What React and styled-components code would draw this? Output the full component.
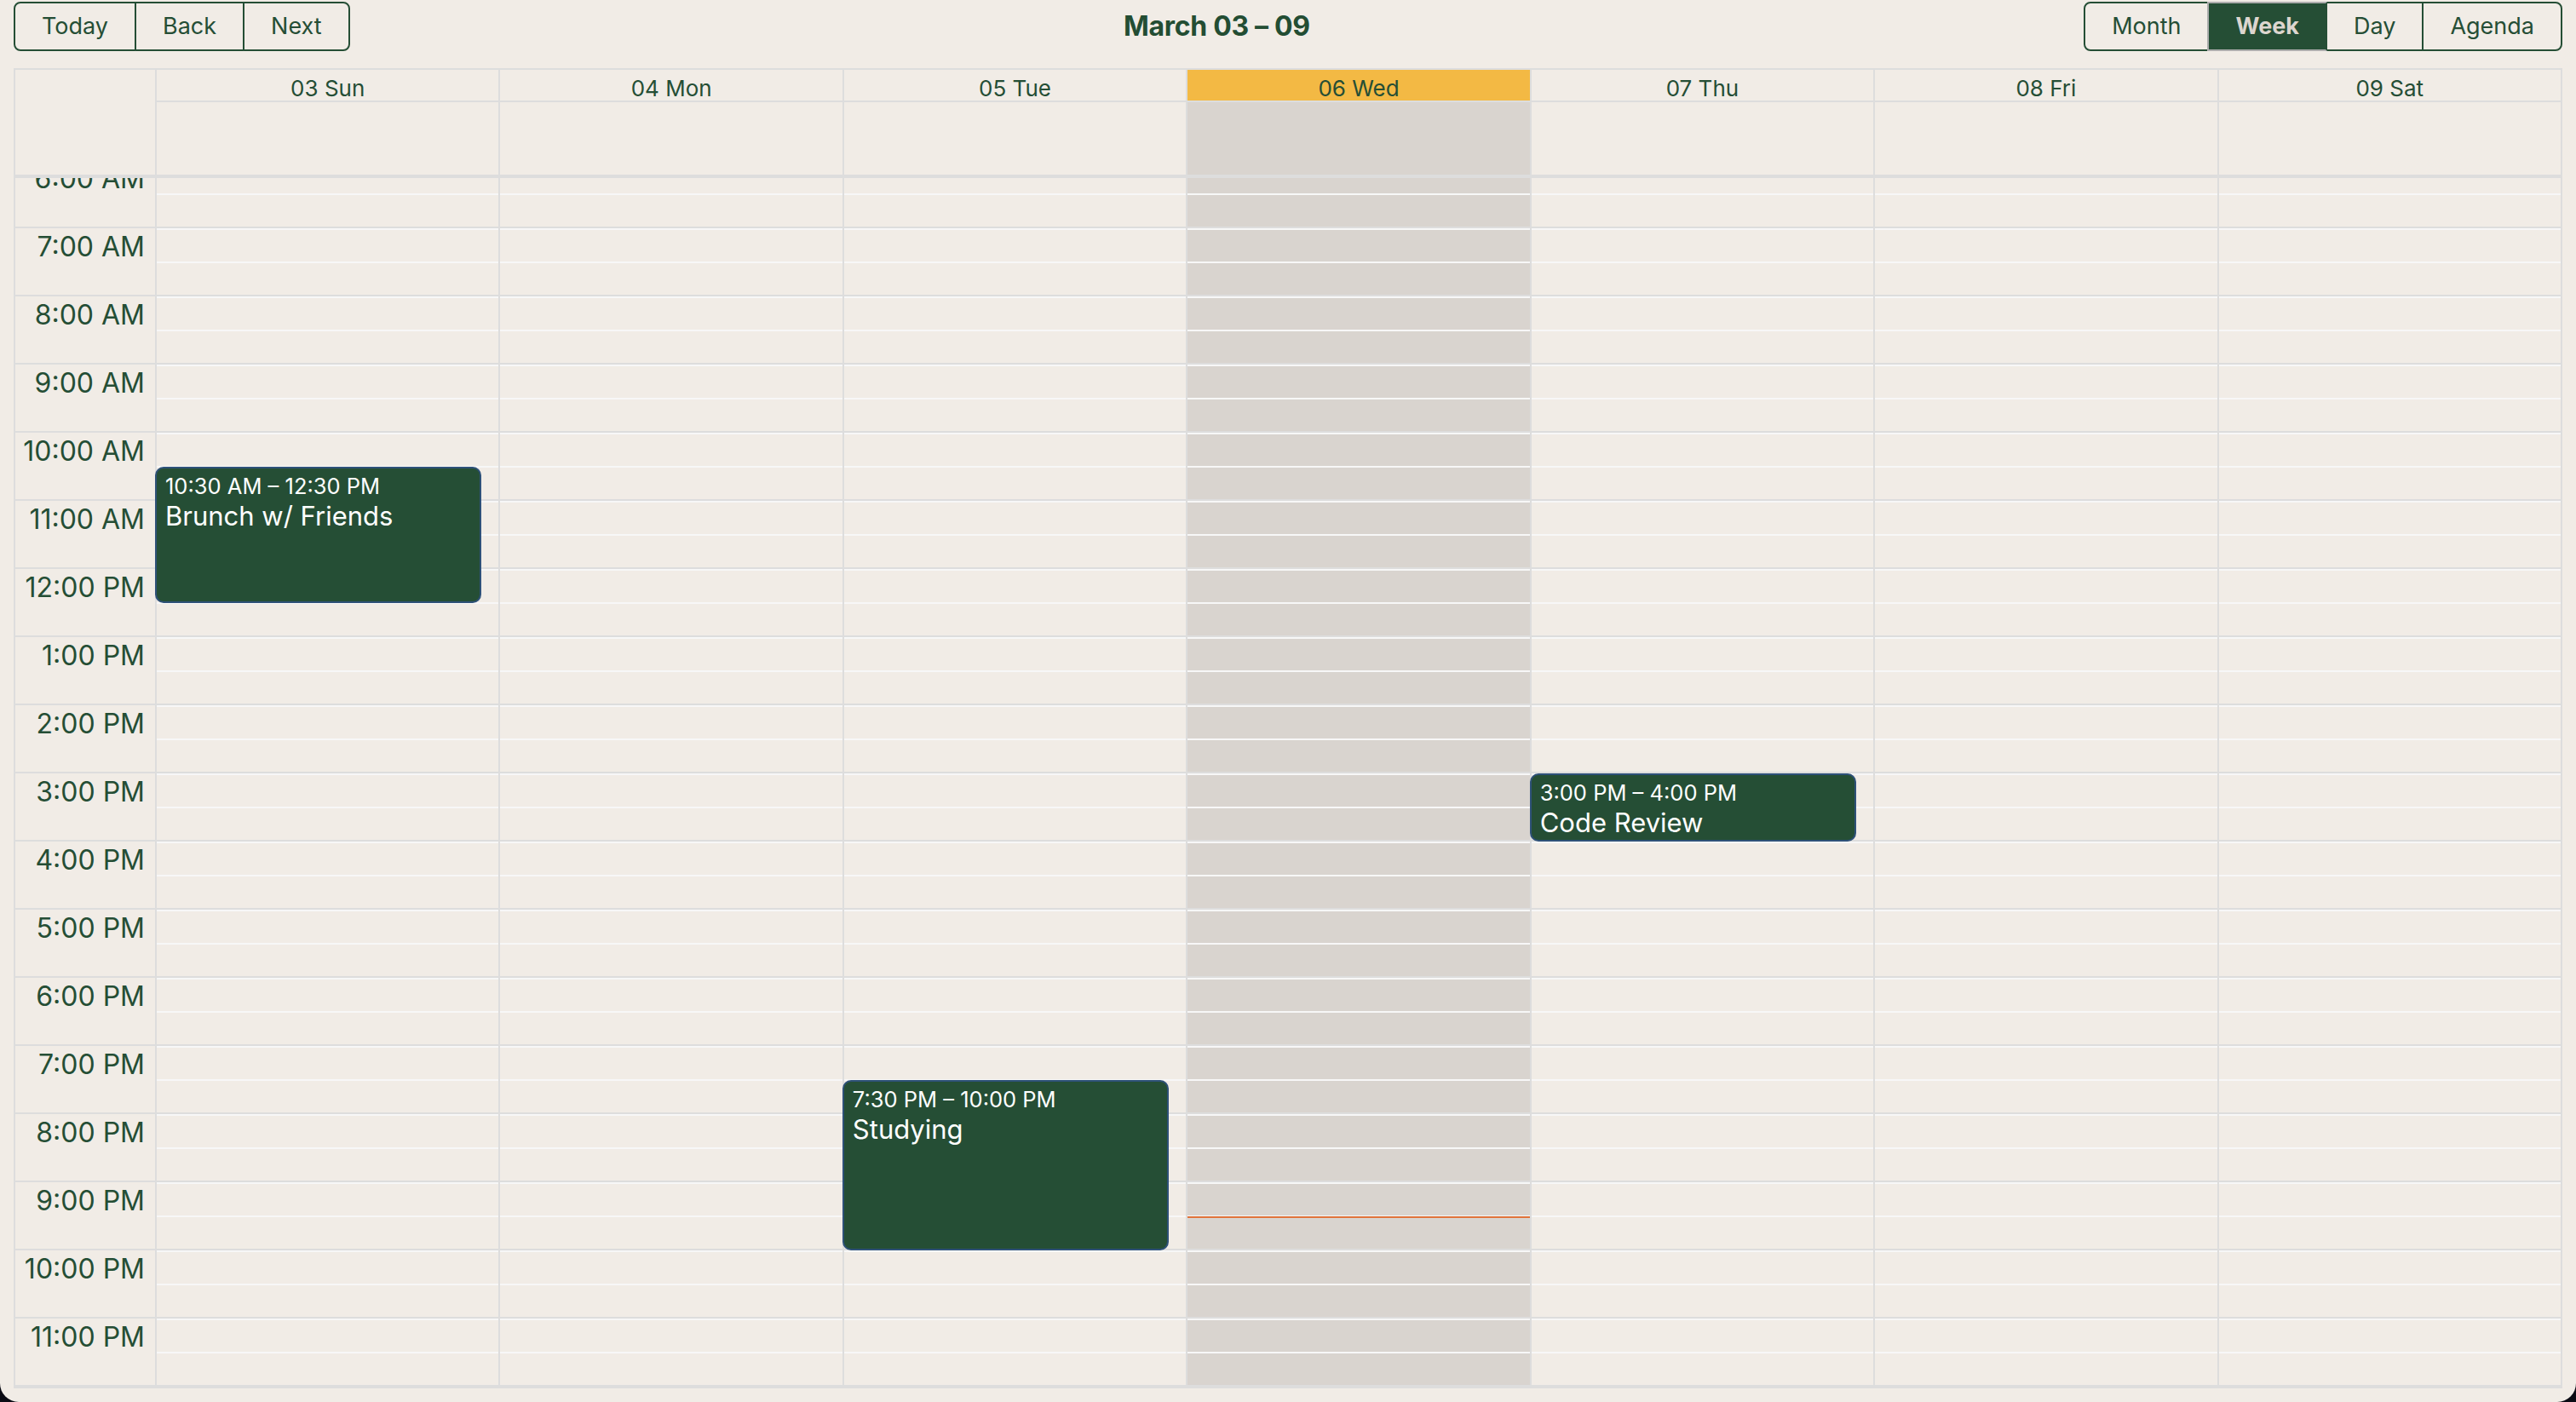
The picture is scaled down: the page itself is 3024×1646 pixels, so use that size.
import React, { useLayoutEffect, useRef } from 'react'
import styled, { createGlobalStyle, css } from 'styled-components'

const GlobalStyle = createGlobalStyle`
  html, body {
    margin: 0;
    padding: 0;
    background: #0b0b14;
  }
  body {
    font-family: Inter, "Noto Sans", "Liberation Sans", sans-serif;
    color: #254e35;
  }
`

const Frame = styled.div`
  height: 1646px;
  box-sizing: border-box;
  padding: 0 16px 16px;
  background: #f1ece6;
  border-radius: 0 0 22px 22px;
  display: flex;
  flex-direction: column;
`

const Toolbar = styled.div`
  display: flex;
  align-items: center;
  height: 60px;
  margin-bottom: 20px;
  padding-top: 1px;
  box-sizing: border-box;
`

const ButtonGroup = styled.div`
  display: inline-flex;
`

const ToolButton = styled.button`
  height: 58px;
  padding: 0 31px;
  margin: 0;
  border: 2px solid #254e35;
  background: transparent;
  color: #254e35;
  font-family: inherit;
  font-size: 27px;
  cursor: pointer;
  border-radius: 0;
  & + & {
    margin-left: -2px;
  }
  &:first-child {
    border-radius: 8px 0 0 8px;
  }
  &:last-child {
    border-radius: 0 8px 8px 0;
  }
  ${p => p.$active && css`
    position: relative;
    background: #254e35;
    color: #ddd6cf;
    font-weight: 700;
    border-color: #adadad #254e35 #adadad #adadad;
  `}
`

const Label = styled.div`
  flex: 1;
  text-align: center;
  font-size: 32px;
  font-weight: 700;
  color: #234d33;
  padding: 0 20px;
  letter-spacing: -0.3px;
`

const Grid = styled.div`
  flex: 1;
  min-height: 0;
  display: flex;
  flex-direction: column;
  border: 2px solid #dddddd;
`

const HeaderRow = styled.div`
  display: flex;
`

const GutterHead = styled.div`
  width: 164px;
  flex: none;
`

const HeaderDays = styled.div`
  flex: 1;
  display: grid;
  grid-template-columns: repeat(7, 1fr);
  grid-template-rows: 38px 85px;
`

const DayName = styled.div`
  border-left: 2px solid #dddddd;
  border-bottom: 2px solid #dddddd;
  display: flex;
  align-items: center;
  justify-content: center;
  padding-top: 6px;
  font-size: 26px;
  color: #254e35;
  background: ${p => (p.$today ? '#f3b944' : 'transparent')};
`

const AllDayCell = styled.div`
  border-left: 2px solid #dddddd;
  background: ${p => (p.$today ? '#d9d4cf' : 'transparent')};
`

const TimeContent = styled.div`
  flex: 1;
  min-height: 0;
  display: flex;
  align-items: flex-start;
  border-top: 4px solid #dddddd;
  overflow: hidden;
`

const Gutter = styled.div`
  width: 164px;
  flex: none;
`

const SlotGroup = styled.div`
  height: 80px;
  box-sizing: border-box;
  border-bottom: 2px solid #dddddd;
  display: flex;
  flex-direction: column;
`

const GutterLabel = styled.div`
  text-align: right;
  padding: 2px 12px 0 0;
  font-size: 32px;
  color: #254e35;
  white-space: nowrap;
`

const DayColumn = styled.div`
  flex: 1;
  position: relative;
  border-left: 2px solid #dddddd;
  background: ${p => (p.$today ? '#d9d4cf' : 'transparent')};
`

const Slot = styled.div`
  flex: 1;
  border-top: 2px solid #f7f7f7;
`

const Event = styled.div`
  position: absolute;
  left: -2px;
  right: 20px;
  box-sizing: border-box;
  background: #254e35;
  border: 2px solid #2e5178;
  border-radius: 10px;
  padding: 5px 10px;
  color: #ffffff;
  overflow: hidden;
`

const EventTime = styled.div`
  font-size: 25.5px;
  line-height: 32px;
`

const EventTitle = styled.div`
  font-size: 31px;
  line-height: 38px;
`

const NowLine = styled.div`
  position: absolute;
  left: 0;
  right: 0;
  height: 2px;
  background: #e0733a;
`

const HOUR = 80
const days = ['03 Sun', '04 Mon', '05 Tue', '06 Wed', '07 Thu', '08 Fri', '09 Sat']
const TODAY = 3

const hourLabel = h => {
  const suffix = h < 12 ? 'AM' : 'PM'
  const n = h % 12 === 0 ? 12 : h % 12
  return `${n}:00 ${suffix}`
}

const events = [
  { day: 0, start: 10.5, end: 12.5, time: '10:30 AM – 12:30 PM', title: 'Brunch w/ Friends' },
  { day: 4, start: 15, end: 16, time: '3:00 PM – 4:00 PM', title: 'Code Review' },
  { day: 2, start: 19.5, end: 22, time: '7:30 PM – 10:00 PM', title: 'Studying' },
]

const hours = Array.from({ length: 24 }, (_, i) => i)

const App = () => {
  const scrollRef = useRef(null)

  useLayoutEffect(() => {
    const el = scrollRef.current
    if (el) el.scrollTop = el.scrollHeight
  }, [])

  return (
    <>
      <GlobalStyle />
      <Frame>
        <Toolbar>
          <ButtonGroup>
            <ToolButton>Today</ToolButton>
            <ToolButton>Back</ToolButton>
            <ToolButton>Next</ToolButton>
          </ButtonGroup>
          <Label>March 03 – 09</Label>
          <ButtonGroup>
            <ToolButton>Month</ToolButton>
            <ToolButton $active>Week</ToolButton>
            <ToolButton>Day</ToolButton>
            <ToolButton>Agenda</ToolButton>
          </ButtonGroup>
        </Toolbar>

        <Grid>
          <HeaderRow>
            <GutterHead />
            <HeaderDays>
              {days.map((d, i) => (
                <DayName key={d} $today={i === TODAY}>{d}</DayName>
              ))}
              {days.map((d, i) => (
                <AllDayCell key={d} $today={i === TODAY} />
              ))}
            </HeaderDays>
          </HeaderRow>

          <TimeContent ref={scrollRef}>
            <Gutter>
              {hours.map(h => (
                <SlotGroup key={h}>
                  <GutterLabel>{hourLabel(h)}</GutterLabel>
                </SlotGroup>
              ))}
            </Gutter>
            {days.map((d, i) => (
              <DayColumn key={d} $today={i === TODAY}>
                {hours.map(h => (
                  <SlotGroup key={h}>
                    <Slot />
                    <Slot />
                  </SlotGroup>
                ))}
                {events
                  .filter(e => e.day === i)
                  .map(e => (
                    <Event
                      key={e.title}
                      style={{ top: e.start * HOUR, height: (e.end - e.start) * HOUR }}
                    >
                      <EventTime>{e.time}</EventTime>
                      <EventTitle>{e.title}</EventTitle>
                    </Event>
                  ))}
                {i === TODAY && <NowLine style={{ top: 21.5 * HOUR }} />}
              </DayColumn>
            ))}
          </TimeContent>
        </Grid>
      </Frame>
    </>
  )
}

export default App
